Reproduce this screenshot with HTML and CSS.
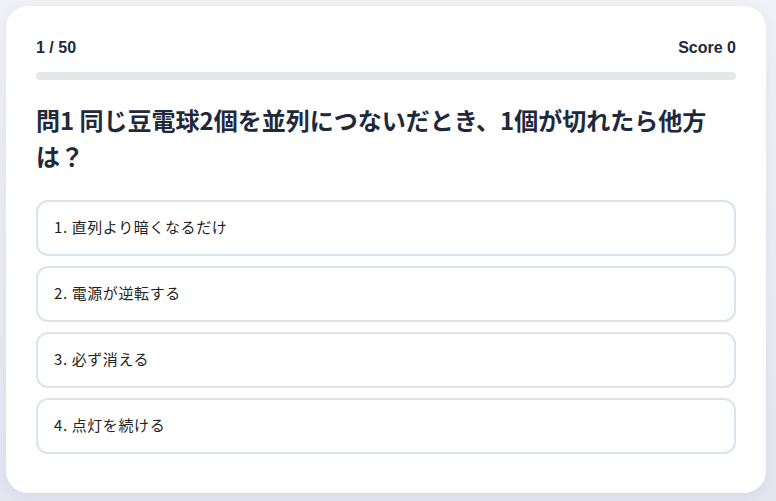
FILE: index.html
```html
<!DOCTYPE html>
<html lang="ja">

<head>
  <meta charset="UTF-8">
  <meta name="viewport" content="width=device-width, initial-scale=1.0">
  <title>Quiz</title>
  <link rel="stylesheet" href="styles.css">
</head>

<body>
  <div class="quiz-card">
    <div class="quiz-head">
      <span class="count">1 / 50</span>
      <span class="score">Score 0</span>
    </div>
    <div class="progress">
      <div class="progress-fill" style="width: 0%;"></div>
    </div>
    <h2 class="question">問1 同じ豆電球2個を並列につないだとき、1個が切れたら他方は？</h2>
    <div class="choices">
      <button class="choice">1. 直列より暗くなるだけ</button>
      <button class="choice">2. 電源が逆転する</button>
      <button class="choice">3. 必ず消える</button>
      <button class="choice">4. 点灯を続ける</button>
    </div>
  </div>
</body>

</html>
```

FILE: styles.css
```css
* {
  box-sizing: border-box;
}

body {
  margin: 0;
  padding: 6px 10px 8px 6px;
  min-height: 100vh;
  background: linear-gradient(to bottom, #f1f2f8, #e4e6f2);
  font-family: "Noto Sans CJK JP", "Noto Sans", sans-serif;
  color: #1e293b;
}

.quiz-card {
  background: #fff;
  border-radius: 22px;
  padding: 30px 30px 39px;
  box-shadow: 0 4px 14px rgba(60, 70, 120, 0.08);
}

.quiz-head {
  display: flex;
  justify-content: space-between;
  font-family: "Liberation Sans", Arial, sans-serif;
  font-size: 16px;
  font-weight: 700;
  line-height: 24px;
}

.progress {
  margin-top: 12px;
  height: 8px;
  border-radius: 4px;
  background: #e5e7eb;
}

.progress-fill {
  height: 100%;
  border-radius: 4px;
  background: #6366f1;
}

.question {
  margin: 22px 0 26px;
  font-size: 24px;
  line-height: 36px;
  font-weight: 700;
}

.choices {
  display: flex;
  flex-direction: column;
  gap: 10px;
}

.choice {
  height: 56px;
  padding: 0 16px 3px;
  border: 2px solid #dde3ea;
  border-radius: 12px;
  background: #fff;
  text-align: left;
  font-family: inherit;
  font-size: 15px;
  letter-spacing: 0.04em;
  color: #222;
  cursor: pointer;
}
```
